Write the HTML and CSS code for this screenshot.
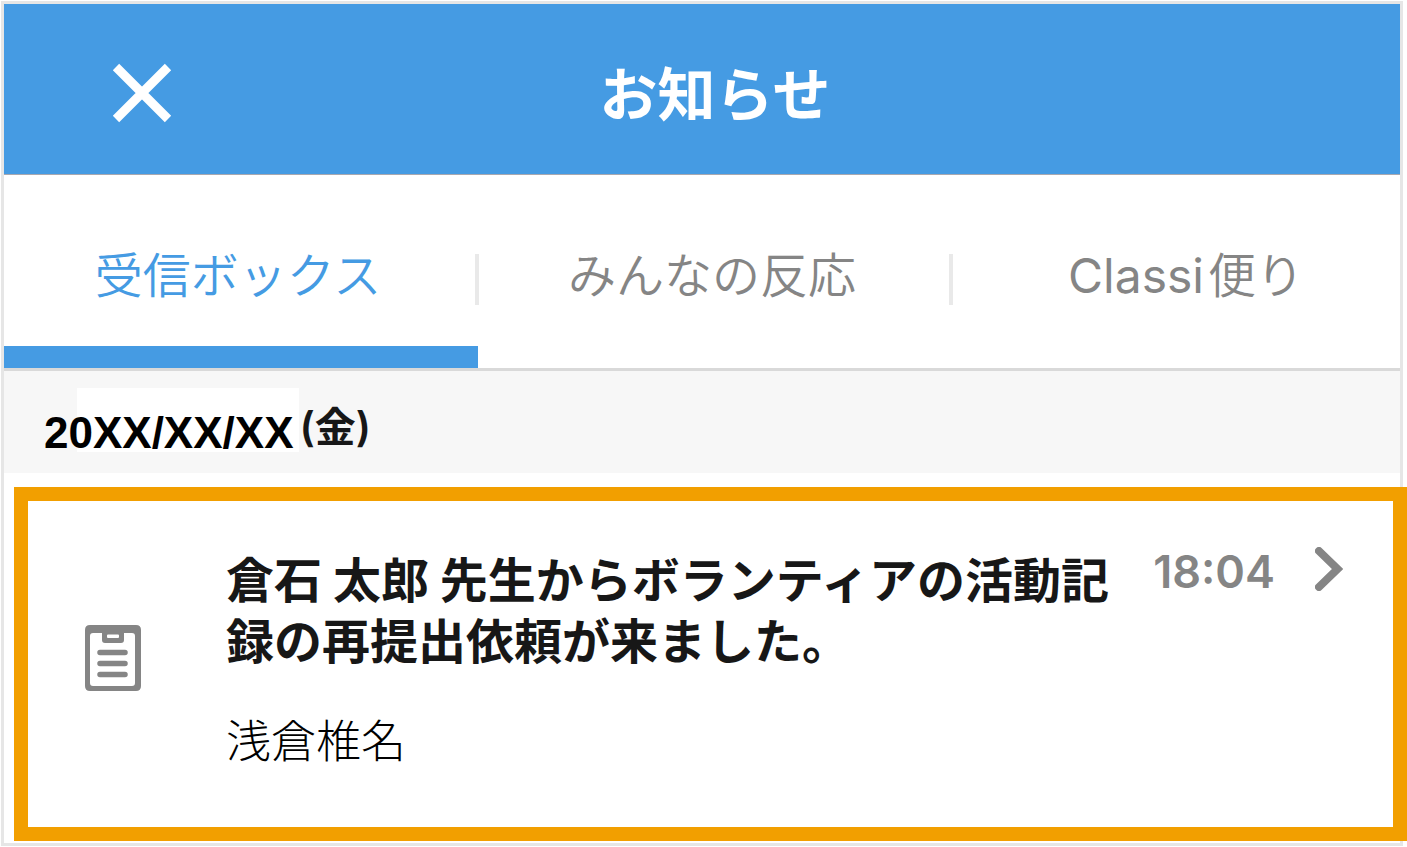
FILE: index.html
```
<!DOCTYPE html>
<html lang="ja">
  <head>
    <meta charset="UTF-8" />
    <meta name="viewport" content="width=device-width, initial-scale=1.0" />
    <title>お知らせ</title>
    <link rel="stylesheet" href="styles.css">
  </head>
  <body>
    <div class="frame">
      <div class="top">
        <header class="header">
          <button type="button" class="close" aria-label="閉じる">
            <svg width="60" height="60" viewBox="0 0 60 60">
              <path d="M4 4L56 56M56 4L4 56" stroke="#fff" stroke-width="9" />
            </svg>
          </button>
          <h1>お知らせ</h1>
        </header>

        <!-- Tabs -->
        <nav class="tabs">
          <a href="#inbox" class="tab active">受信ボックス</a>
          <a href="#reactions" class="tab">みんなの反応</a>
          <a href="#classi" class="tab"><span class="brand">Classi</span>便り</a>
        </nav>
      </div>

      <h2 class="date"><span class="day">20XX/XX/XX</span><span class="weekday">(金)</span></h2>

      <!-- Highlighted notice -->
      <a href="#notice" class="notice">
        <svg class="clipboard" width="56" height="66" viewBox="0 0 56 66">
          <path
            fill="#858585"
            fill-rule="evenodd"
            d="M5 0H51Q56 0 56 5V61Q56 66 51 66H5Q0 66 0 61V5Q0 0 5 0ZM8 8Q5 8 5 11V58Q5 61 8 61H47Q50 61 50 58V11Q50 8 47 8H39V15Q39 18 36 18H20Q17 18 17 15V8ZM23 9.500Q22 9.500 22 10.500V12Q22 13 23 13H33Q34 13 34 12V10.500Q34 9.500 33 9.500Z"
          />
          <path
            d="M15 27.500H40M15 38.500H40M15 49.500H40"
            stroke="#858585"
            stroke-width="5.500"
            stroke-linecap="round"
          />
        </svg>
        <div class="message">
          <h3>倉石 太郎 先生からボランティアの活動記録の再提出依頼が来ました。</h3>
          <p>浅倉椎名</p>
        </div>
        <time class="time">18:04</time>
        <svg class="chevron" width="28" height="44" viewBox="0 0 28 44">
          <path
            d="M4 4L22.500 22L4 40"
            fill="none"
            stroke="#858585"
            stroke-width="8"
            stroke-linecap="round"
          />
        </svg>
      </a>
    </div>
  </body>
</html>
```

FILE: styles.css
```
* {
  box-sizing: border-box;
}

body {
  margin: 0;
  padding: 1px 4px 1px 1px;
  font-family: Inter, "Noto Sans CJK JP", sans-serif;
  background-color: #fff;
  color: #171717;
}

h1,
h2,
h3,
p {
  margin: 0;
}

a {
  color: inherit;
  text-decoration: none;
}

.frame {
  border: 3px solid #e6e6e6;
}

/* Header and tabs run a little past the right edge and are cut there */
.top {
  overflow: hidden;
}

.header,
.tabs {
  margin-right: -26px;
}

.header {
  display: grid;
  grid-template-columns: 1fr auto 1fr;
  align-items: center;
  height: 171px;
  padding-top: 8px;
  background-color: #459be3;
  border-bottom: 1px solid #a8a8b0;
}

.close {
  justify-self: start;
  margin-left: 108px;
  padding: 0;
  border: none;
  background: none;
  cursor: pointer;
}

.close svg {
  display: block;
}

.header h1 {
  padding-top: 3px;
  color: #fff;
  font-size: 58px;
  font-weight: 600;
  line-height: 80px;
}

/* Tabs */
.tabs {
  display: grid;
  grid-template-columns: repeat(3, 1fr);
  border-bottom: 3px solid #d9d9d9;
}

.tab {
  position: relative;
  height: 193px;
  padding-top: 67px;
  padding-right: 6px;
  font-size: 48px;
  font-weight: 350;
  line-height: 68px;
  text-align: center;
  color: #858585;
}

.tab.active {
  color: #459be3;
  border-bottom: 22px solid #459be3;
}

.brand {
  margin-right: 4px;
  font-weight: 400;
}

/* Divider between tabs */
.tab + .tab::before {
  content: "";
  position: absolute;
  left: -3px;
  top: 79px;
  width: 4px;
  height: 51px;
  background-color: #e9e9e9;
}

/* Date row */
.date {
  display: flex;
  align-items: center;
  height: 102px;
  padding-left: 40px;
  background-color: #f7f7f7;
}

.day {
  position: relative;
  z-index: 0;
  padding-top: 22px;
  color: #000;
  font-family: "Liberation Sans", Arial, sans-serif;
  font-size: 44px;
  line-height: 50px;
}

.day::before {
  content: "";
  position: absolute;
  z-index: -1;
  top: 2px;
  bottom: 6px;
  left: 33px;
  right: -6px;
  background-color: #fff;
}

.weekday {
  margin-left: 6px;
  padding-top: 10px;
  font-size: 41px;
  font-weight: 600;
  line-height: 60px;
}

/* Notice */
.notice {
  position: relative;
  display: flex;
  align-items: flex-start;
  margin: 14px -7px 2px 10px;
  padding: 46px 50px 58px 57px;
  border: 14px solid #f29f00;
  background-color: #fff;
}

.clipboard {
  flex: none;
  margin-top: 78px;
}

.message {
  flex: 1;
  margin-left: 85px;
  font-family: "Noto Sans CJK JP", sans-serif;
}

.message h3 {
  font-size: 48px;
  font-weight: 600;
  line-height: 61px;
}

.message p {
  margin-top: 40px;
  color: #000;
  font-size: 45px;
  font-weight: 300;
  line-height: 60px;
}

.time {
  margin-left: 32px;
  color: #858585;
  font-size: 45px;
  font-weight: 600;
  line-height: 50px;
}

.chevron {
  flex: none;
  margin-left: 40px;
}
```
